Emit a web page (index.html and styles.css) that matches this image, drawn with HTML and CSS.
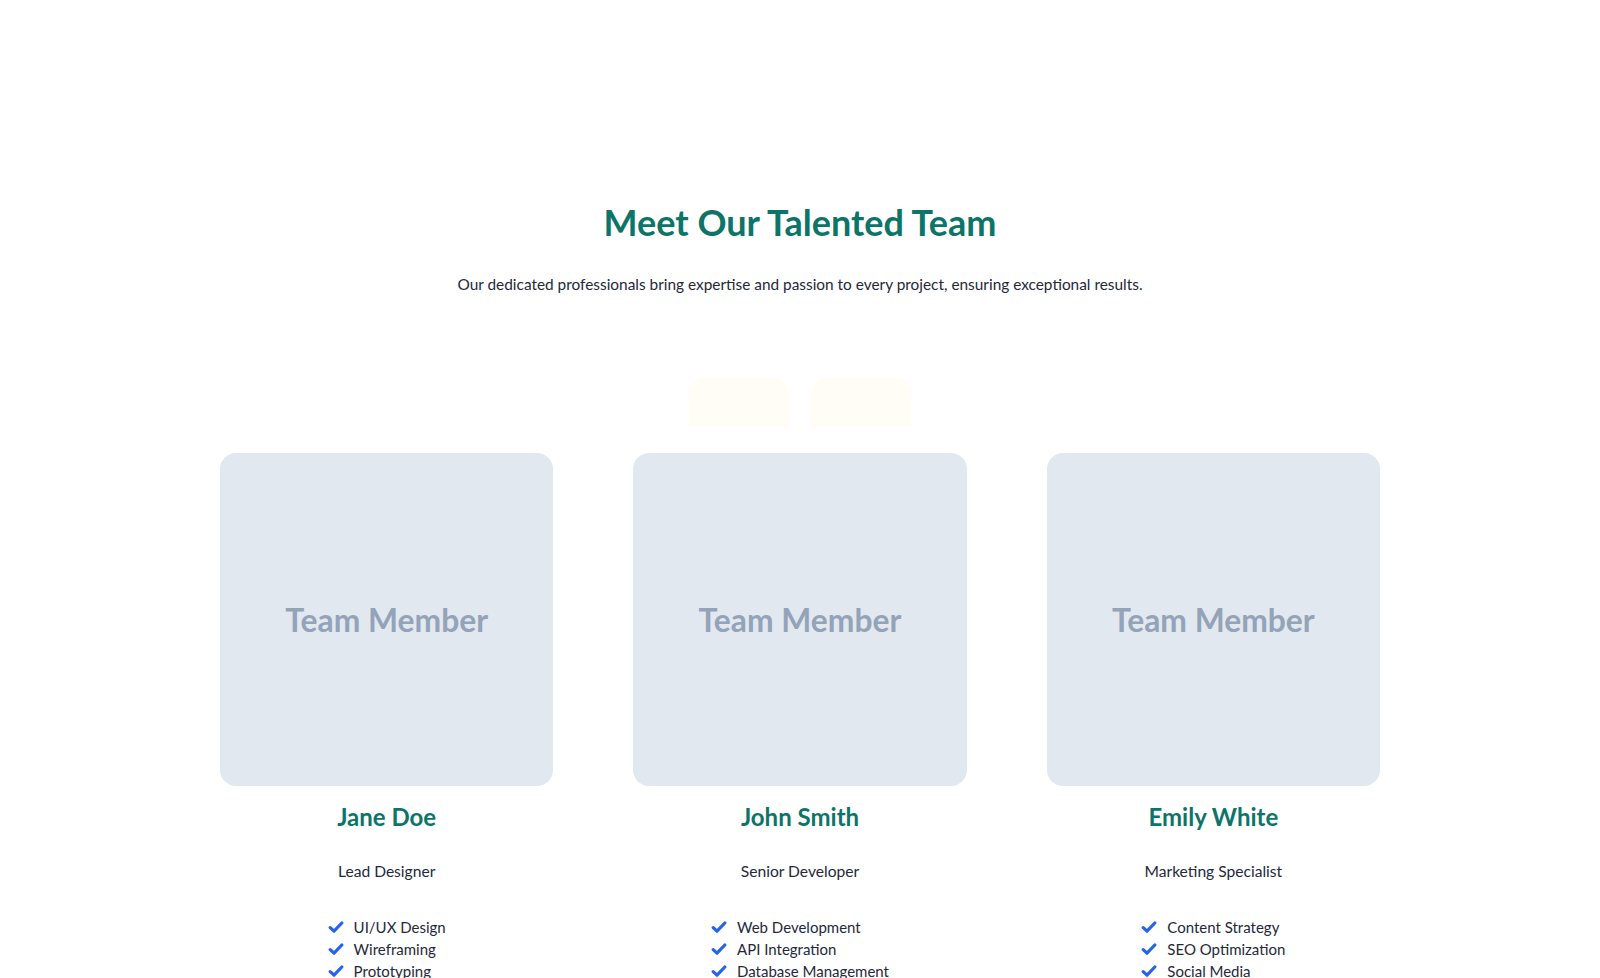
FILE: index.html
```html
<!DOCTYPE html>
<html lang="en">
<head>
  <meta charset="UTF-8" />
  <meta name="viewport" content="width=device-width, initial-scale=1.0"/>
  <title>Our Team</title>
  <link rel="stylesheet" href="styles.css">
</head>
<body>
  <section class="team">
    <h2 class="team-title">Meet Our Talented Team</h2>
    <p class="team-intro">Our dedicated professionals bring expertise and passion to every project, ensuring exceptional results.</p>

    <div class="team-tabs">
      <span class="tab"></span>
      <span class="tab"></span>
    </div>

    <div class="team-grid">
      <div class="member">
        <div class="photo">Team Member</div>
        <h3 class="name">Jane Doe</h3>
        <p class="role">Lead Designer</p>
        <ul class="skills">
          <li><svg viewBox="0 0 16 16"><path d="M2.2 8.6l3.8 3.6 7.8-8.2"/></svg>UI/UX Design</li>
          <li><svg viewBox="0 0 16 16"><path d="M2.2 8.6l3.8 3.6 7.8-8.2"/></svg>Wireframing</li>
          <li><svg viewBox="0 0 16 16"><path d="M2.2 8.6l3.8 3.6 7.8-8.2"/></svg>Prototyping</li>
        </ul>
      </div>
      <div class="member">
        <div class="photo">Team Member</div>
        <h3 class="name">John Smith</h3>
        <p class="role">Senior Developer</p>
        <ul class="skills">
          <li><svg viewBox="0 0 16 16"><path d="M2.2 8.6l3.8 3.6 7.8-8.2"/></svg>Web Development</li>
          <li><svg viewBox="0 0 16 16"><path d="M2.2 8.6l3.8 3.6 7.8-8.2"/></svg>API Integration</li>
          <li><svg viewBox="0 0 16 16"><path d="M2.2 8.6l3.8 3.6 7.8-8.2"/></svg>Database Management</li>
        </ul>
      </div>
      <div class="member">
        <div class="photo">Team Member</div>
        <h3 class="name">Emily White</h3>
        <p class="role">Marketing Specialist</p>
        <ul class="skills">
          <li><svg viewBox="0 0 16 16"><path d="M2.2 8.6l3.8 3.6 7.8-8.2"/></svg>Content Strategy</li>
          <li><svg viewBox="0 0 16 16"><path d="M2.2 8.6l3.8 3.6 7.8-8.2"/></svg>SEO Optimization</li>
          <li><svg viewBox="0 0 16 16"><path d="M2.2 8.6l3.8 3.6 7.8-8.2"/></svg>Social Media</li>
        </ul>
      </div>
    </div>
  </section>
</body>
</html>
```

FILE: styles.css
```css
body {
  margin: 0;
  font-family: Lato, "Noto Sans", Arial, sans-serif;
  background: #ffffff;
  color: #1e293b;
}

.team {
  max-width: 1160px;
  margin: 0 auto;
  padding-top: 200px;
  text-align: center;
}

.team-title {
  margin: 0;
  font-size: 36px;
  line-height: 44px;
  font-weight: 700;
  color: #0d7468;
}

.team-intro {
  margin: 28px 0 0;
  font-size: 15.4px;
  line-height: 24px;
  color: #1e293b;
}

/* faint tab buttons above the grid */
.team-tabs {
  display: flex;
  justify-content: center;
  gap: 22px;
  margin-top: 81px;
  padding-right: 1px;
}

.tab {
  width: 100px;
  height: 50px;
  background: #fffdf6;
  border-radius: 18px 18px 0 0;
}

.team-grid {
  display: grid;
  grid-template-columns: repeat(3, 1fr);
  gap: 80px;
  margin-top: 26px;
}

.photo {
  aspect-ratio: 1 / 1;
  background: #e2e8f0;
  border-radius: 16px;
  display: flex;
  align-items: center;
  justify-content: center;
  font-family: Lato, sans-serif;
  font-weight: 700;
  font-size: 31.8px;
  color: #94a3b8;
}

.name {
  margin: 16px 0 0;
  font-size: 24px;
  line-height: 30px;
  font-weight: 700;
  color: #0d7468;
}

.role {
  margin: 29px 0 0;
  font-size: 15.6px;
  line-height: 20px;
}

.skills {
  display: inline-block;
  list-style: none;
  margin: 35px 0 0;
  padding: 0;
  text-align: left;
  font-size: 15px;
  line-height: 22px;
}

.skills li {
  display: flex;
  align-items: center;
  gap: 10px;
}

.skills svg {
  width: 16px;
  height: 16px;
  fill: none;
  stroke: #2563eb;
  stroke-width: 3.2;
  stroke-linecap: round;
  stroke-linejoin: round;
}
```
